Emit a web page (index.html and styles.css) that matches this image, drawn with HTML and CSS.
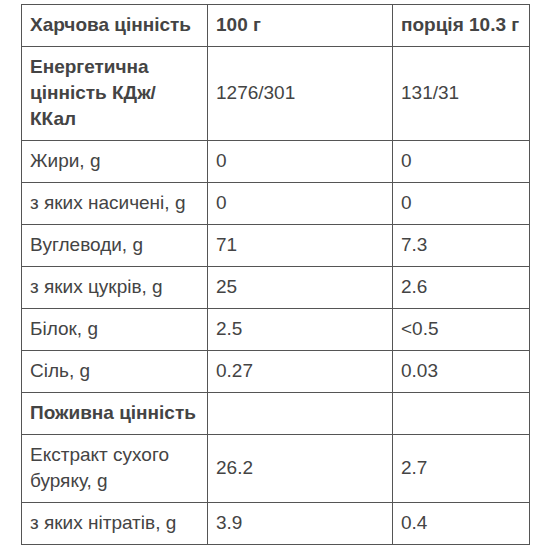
FILE: index.html
```html
<!DOCTYPE html>
<html lang="uk">
<head>
<meta charset="utf-8">
<link rel="stylesheet" href="styles.css">
</head>
<body>
<table class="nutrition">
  <colgroup>
    <col class="c1"><col class="c2"><col class="c3">
  </colgroup>
  <tr class="bold"><td>Харчова цінність</td><td>100 г</td><td>порція 10.3 г</td></tr>
  <tr><td class="bold">Енергетична цінність КДж/ ККал</td><td>1276/301</td><td>131/31</td></tr>
  <tr><td>Жири, g</td><td>0</td><td>0</td></tr>
  <tr><td>з яких насичені, g</td><td>0</td><td>0</td></tr>
  <tr><td>Вуглеводи, g</td><td>71</td><td>7.3</td></tr>
  <tr><td>з яких цукрів, g</td><td>25</td><td>2.6</td></tr>
  <tr><td>Білок, g</td><td>2.5</td><td>&lt;0.5</td></tr>
  <tr><td>Сіль, g</td><td>0.27</td><td>0.03</td></tr>
  <tr class="bold"><td>Поживна цінність</td><td></td><td></td></tr>
  <tr><td>Екстракт сухого буряку, g</td><td>26.2</td><td>2.7</td></tr>
  <tr><td>з яких нітратів, g</td><td>3.9</td><td>0.4</td></tr>
</table>
</body>
</html>
```
FILE: styles.css
```css
html, body {
  margin: 0;
  padding: 0;
  background: #fff;
}
body {
  font-family: "Liberation Sans", Arial, sans-serif;
  font-size: 19px;
  line-height: 26px;
  color: #444;
}
.nutrition {
  border-collapse: collapse;
  margin: 4px 0 0 21px;
  width: 508px;
  table-layout: fixed;
}
.c1 { width: 186px; }
.c2 { width: 185px; }
.c3 { width: 137px; }
.nutrition td {
  border: 1px solid #555;
  padding: 7px 8px 8px;
  vertical-align: middle;
  text-align: left;
}
.bold, .bold td {
  font-weight: bold;
}
```
